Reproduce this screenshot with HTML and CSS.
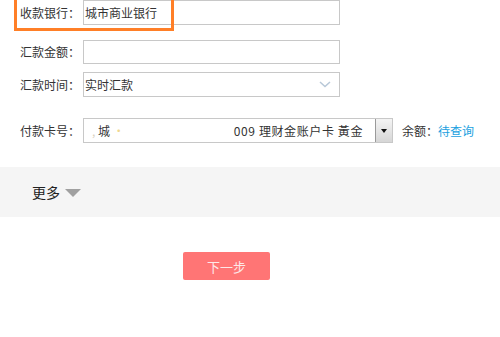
FILE: index.html
```html
<!DOCTYPE html>
<html lang="zh-CN">
<head>
    <meta charset="UTF-8">
    <title>汇款</title>
    <link rel="stylesheet" href="styles.css">
</head>
<body>
    <div class="page">
        <form class="transfer-form">
            <div class="row row-bank">
                <label class="label">收款银行：</label>
                <div class="field">城市商业银行</div>
                <div class="highlight"></div>
            </div>
            <div class="row row-amount">
                <label class="label">汇款金额：</label>
                <div class="field"></div>
            </div>
            <div class="row row-time">
                <label class="label">汇款时间：</label>
                <div class="field field-select">
                    <span class="field-text">实时汇款</span>
                    <svg class="chevron" width="12" height="7" viewBox="0 0 12 7">
                        <path d="M1 1 L6 5.5 L11 1" fill="none" stroke="#b8c8d8" stroke-width="1.5"/>
                    </svg>
                </div>
            </div>
            <div class="row row-card">
                <label class="label">付款卡号：</label>
                <div class="card-select">
                    <span class="card-left"><span class="faded">,</span> 城 <span class="faded dot">·</span></span>
                    <span class="card-right">009 理财金账户卡 黃金</span>
                    <span class="card-button"><span class="card-arrow"></span></span>
                </div>
                <span class="balance">余额：</span><a class="query" href="#">待查询</a>
            </div>
        </form>

        <div class="more-bar">
            <span class="more-text">更多</span>
            <span class="more-arrow"></span>
        </div>

        <div class="actions">
            <button type="button" class="next-btn">下一步</button>
        </div>
    </div>
</body>
</html>
```

FILE: styles.css
```css
body {
    margin: 0;
    background-color: #fff;
    font-family: "Noto Sans CJK SC", "Liberation Sans", sans-serif;
    font-size: 12px;
    color: #333;
}
.page {
    width: 500px;
}
.transfer-form {
    margin: 0;
}
.row {
    position: relative;
    display: flex;
    align-items: center;
    height: 25px;
    padding-left: 20px;
}
.row-amount {
    margin-top: 14px;
}
.row-time {
    margin-top: 8px;
}
.row-card {
    margin-top: 21px;
}
.label {
    width: 63px;
    line-height: 25px;
    white-space: nowrap;
}
.field {
    box-sizing: border-box;
    width: 257px;
    height: 25px;
    border: 1px solid #c8c8c8;
    padding-left: 1px;
    line-height: 23px;
    color: #333;
}
.row-amount .field {
    height: 24px;
}
.field-select {
    display: flex;
    align-items: center;
    justify-content: space-between;
    padding-right: 8px;
}
.chevron {
    display: block;
}
.highlight {
    position: absolute;
    left: 14px;
    top: -4px;
    width: 160px;
    height: 35px;
    box-sizing: border-box;
    border: 3px solid #ff7f27;
    pointer-events: none;
}
.card-select {
    box-sizing: border-box;
    width: 310px;
    height: 25px;
    border: 1px solid #c8c8c8;
    display: flex;
    align-items: center;
    line-height: 23px;
}
.card-left {
    padding-left: 8px;
    width: 136px;
    color: #333;
}
.faded {
    color: #d8d0c0;
}
.dot {
    color: #f0d890;
}
.card-right {
    flex: 1;
    text-align: right;
    padding-right: 12px;
    white-space: nowrap;
    letter-spacing: 0.6px;
}
.card-button {
    box-sizing: border-box;
    width: 17px;
    height: 23px;
    border-left: 1px solid #9a9a9a;
    background: linear-gradient(#f4f4f4, #d6d6d6);
    display: flex;
    align-items: center;
    justify-content: center;
}
.card-arrow {
    width: 0;
    height: 0;
    border-left: 3px solid transparent;
    border-right: 3px solid transparent;
    border-top: 4px solid #111;
}
.balance {
    margin-left: 9px;
}
.query {
    color: #1a9fe0;
    text-decoration: none;
}
.more-bar {
    margin-top: 24px;
    height: 50px;
    background-color: #f5f5f5;
    display: flex;
    align-items: center;
    padding-left: 32px;
}
.more-text {
    font-size: 14px;
    color: #222;
}
.more-arrow {
    margin-left: 5px;
    margin-top: 2px;
    width: 0;
    height: 0;
    border-left: 8px solid transparent;
    border-right: 8px solid transparent;
    border-top: 8px solid #a0a0a0;
}
.actions {
    padding-top: 35px;
    padding-left: 183px;
}
.next-btn {
    width: 87px;
    height: 28px;
    border: none;
    border-radius: 2px;
    background-color: #ff7575;
    color: #fde8e8;
    font-family: "Noto Sans CJK SC", sans-serif;
    font-size: 13px;
    padding: 0;
    cursor: pointer;
}
```
